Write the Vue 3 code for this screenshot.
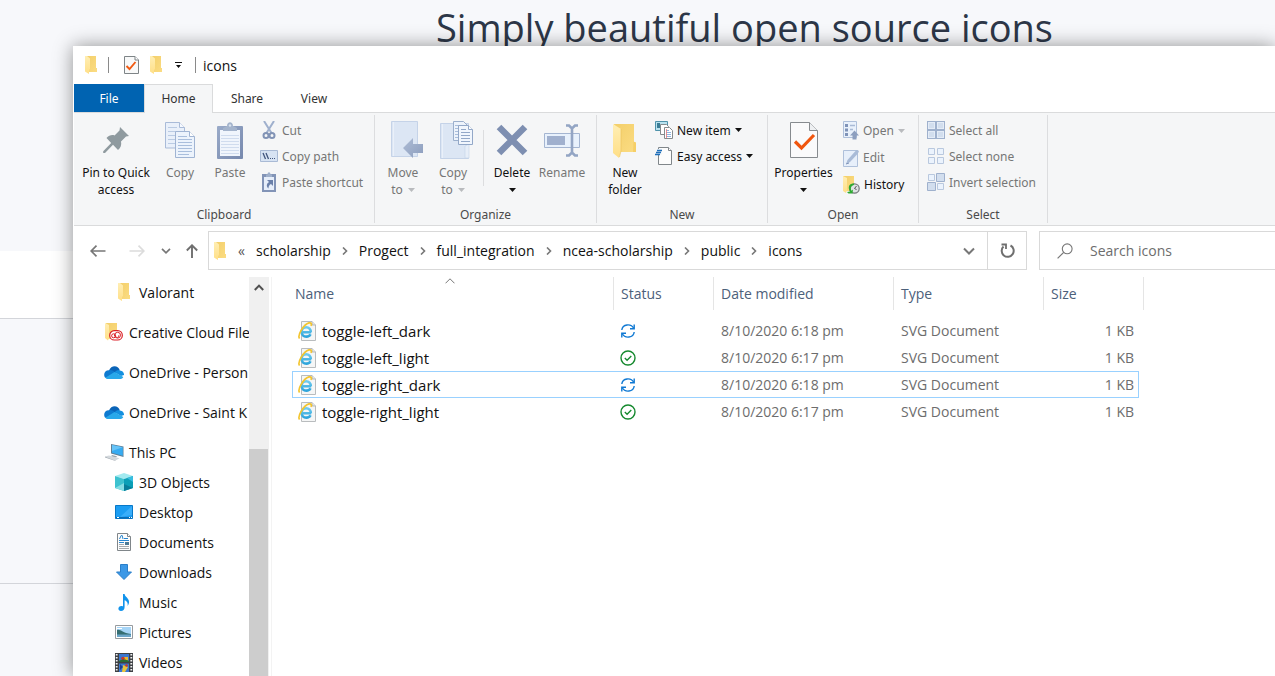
<script setup>
import { h, ref } from 'vue'

const sizes = {
  folder: [12, 18], propdoc: [15, 18], qat: [7, 6],
  pin: [26, 26], copy: [30, 36], paste: [26, 37], moveto: [40, 38], copyto: [42, 38],
  delete: [32, 32], rename: [36, 33], bigfolder: [24, 35], properties: [28, 36],
  cut: [18, 18], path: [18, 12], shortcut: [18, 20], newitem: [18, 18], easy: [18, 18],
  open: [16, 19], edit: [16, 18], history: [17, 18],
  selall: [18, 18], selnone: [18, 18], selinv: [18, 18],
  caret: [7, 4], back: [16, 12], forward: [16, 12], down: [10, 6], up: [12, 14],
  sep: [6, 8], expand: [12, 8], refresh: [15, 15], search: [16, 16], sort: [10, 6], scrollup: [10, 7],
  cloudfolder: [18, 18], onedrive: [20, 13], pc: [19, 18], cube: [18, 18], desktop: [18, 14],
  document: [16, 18], download: [16, 16], music: [12, 17], picture: [18, 14], video: [18, 19],
  svgdoc: [18, 20], sync: [14, 14], check: [16, 16],
}
const Icon = ({ name }) => {
  const [width, height] = sizes[name]
  return h('svg', { width, height, class: 'icon', 'aria-hidden': 'true' }, [h('use', { href: '#i-' + name })])
}
Icon.props = ['name']

const query = ref('')
const tabs = ['File', 'Home', 'Share', 'View']
const groups = [
  { name: 'Clipboard', cls: 'g-clip',
    big: [
      { icon: 'pin', lines: ['Pin to Quick', 'access'], wide: true },
      { icon: 'copy', lines: ['Copy'], off: true },
      { icon: 'paste', lines: ['Paste'], off: true },
    ],
    small: [
      { icon: 'cut', text: 'Cut', off: true },
      { icon: 'path', text: 'Copy path', off: true },
      { icon: 'shortcut', text: 'Paste shortcut', off: true },
    ] },
  { name: 'Organize', cls: 'g-org',
    big: [
      { icon: 'moveto', lines: ['Move', 'to'], off: true, caret: true },
      { icon: 'copyto', lines: ['Copy', 'to'], off: true, caret: true, divide: true },
      { icon: 'delete', lines: ['Delete', ''], caret: true },
      { icon: 'rename', lines: ['Rename'], off: true },
    ] },
  { name: 'New', cls: 'g-new',
    big: [{ icon: 'bigfolder', lines: ['New', 'folder'] }],
    small: [
      { icon: 'newitem', text: 'New item', caret: true },
      { icon: 'easy', text: 'Easy access', caret: true },
    ] },
  { name: 'Open', cls: 'g-open',
    big: [{ icon: 'properties', lines: ['Properties', ''], caret: true, mid: true }],
    small: [
      { icon: 'open', text: 'Open', off: true, caret: true },
      { icon: 'edit', text: 'Edit', off: true },
      { icon: 'history', text: 'History' },
    ] },
  { name: 'Select', cls: 'g-sel',
    small: [
      { icon: 'selall', text: 'Select all', off: true },
      { icon: 'selnone', text: 'Select none', off: true },
      { icon: 'selinv', text: 'Invert selection', off: true },
    ] },
]
const crumbs = ['scholarship', 'Progect', 'full_integration', 'ncea-scholarship', 'public', 'icons']
const places = [
  { icon: 'folder', text: 'Valorant', child: true },
  { icon: 'cloudfolder', text: 'Creative Cloud File', gap: true },
  { icon: 'onedrive', text: 'OneDrive - Person', gap: true },
  { icon: 'onedrive', text: 'OneDrive - Saint K', gap: true },
  { icon: 'pc', text: 'This PC', gap: true },
  { icon: 'cube', text: '3D Objects', child: true },
  { icon: 'desktop', text: 'Desktop', child: true },
  { icon: 'document', text: 'Documents', child: true },
  { icon: 'download', text: 'Downloads', child: true },
  { icon: 'music', text: 'Music', child: true },
  { icon: 'picture', text: 'Pictures', child: true },
  { icon: 'video', text: 'Videos', child: true },
]
const files = [
  { name: 'toggle-left_dark', status: 'sync', date: '8/10/2020 6:18 pm' },
  { name: 'toggle-left_light', status: 'check', date: '8/10/2020 6:17 pm' },
  { name: 'toggle-right_dark', status: 'sync', date: '8/10/2020 6:18 pm', focus: true },
  { name: 'toggle-right_light', status: 'check', date: '8/10/2020 6:17 pm' },
]
</script>

<template>
  <div class="page">
    <svg class="sprite" width="0" height="0" aria-hidden="true">
      <defs>
        <linearGradient id="gFold" x1="0" x2="1" y1="0" y2="1"><stop offset="0" stop-color="#f3cf6a" /><stop offset="1" stop-color="#fbdc83" /></linearGradient>
        <linearGradient id="gFlap" x1="0" x2="0" y1="0" y2="1"><stop offset="0" stop-color="#ffeeb4" /><stop offset="1" stop-color="#ffdf87" /></linearGradient>
        <linearGradient id="gClip" x1="0" x2="1" y1="0" y2="1"><stop offset="0" stop-color="#9aabc9" /><stop offset="1" stop-color="#7688ad" /></linearGradient>
        <linearGradient id="gArr" x1="0" x2="1" y1="0" y2="1"><stop offset="0" stop-color="#aebdd6" /><stop offset="1" stop-color="#8c9dbd" /></linearGradient>
        <linearGradient id="gE" x1="0" x2="0" y1="0" y2="1"><stop offset="0" stop-color="#6fcbee" /><stop offset="1" stop-color="#2fa5dc" /></linearGradient>
      </defs>
      <symbol id="i-folder" viewBox="0 0 12 18">
        <path d="M1 0h10v12h1v4H3z" fill="url(#gFold)" /><path d="M0 0h2l3 2.500V13l-1 1v4L0 15.500z" fill="url(#gFlap)" />
      </symbol>
      <symbol id="i-bigfolder" viewBox="0 0 24 35">
        <path d="M1 1h20v18l2 1v9H6z" fill="url(#gFold)" /><path d="M20.500 18.500l2.500 1v9.500h-3z" fill="#f6cf67" />
        <path d="M0 1l8 5v22l-2 7-6-5z" fill="url(#gFlap)" /><path d="M8 6v22l-1.500 6" stroke="#e9bf57" fill="none" stroke-width=".6" />
      </symbol>
      <symbol id="i-propdoc" viewBox="0 0 15 18">
        <path d="M.5.500h10.500l3.500 3.500v13.500H.5z" fill="#f8f9f9" stroke="#7e8487" /><path d="M11 .5V4h3.500" fill="#fff" stroke="#7e8487" />
        <path d="M2.500 10l3 3 6-7" fill="none" stroke="#f15a12" stroke-width="1.900" />
      </symbol>
      <symbol id="i-qat" viewBox="0 0 7 6"><path d="M0 0h7v1H0zM1 3h5L3.500 6z" fill="#111" /></symbol>
      <symbol id="i-pin" viewBox="0 0 26 26">
        <path d="M17 0l9 9-3 .5-5 5c.8 3-.3 6.500-3 8.500l-5-5.200L2 26H.2v-1.800l8-8.200L3.500 11c2-2.600 5.500-3.500 8-2.600l5-5z" fill="#8f9a9f" />
      </symbol>
      <symbol id="i-copy" viewBox="0 0 30 36">
        <path d="M.5.500h14l5 5V26H.5z" fill="#e9f0fa" stroke="#a9bbd8" /><path d="M14.500.5v5h5" fill="#f7faff" stroke="#a9bbd8" />
        <path d="M3 5.500h9M3 9.500h13M3 13.500h8M3 17.500h8M3 21.500h8" stroke="#bacbe3" />
        <path d="M10.500 9.500h14l5 5v21h-19z" fill="#ecf3fc" stroke="#a0b4d3" /><path d="M24.500 9.500v5h5" fill="#fff" stroke="#a0b4d3" />
        <path d="M13 14.500h9M13 17.500h14M13 20.500h14M13 23.500h14M13 26.500h14M13 29.500h14M13 32.500h11" stroke="#a9bedc" />
      </symbol>
      <symbol id="i-paste" viewBox="0 0 26 37">
        <rect y="4" width="26" height="33" rx="1" fill="url(#gClip)" /><path d="M3 8h20v26H3z" fill="#f0f5fc" />
        <path d="M4 13.500h18M4 16.500h18M4 19.500h18M4 22.500h18M4 25.500h18M4 28.500h18M4 31.500h18" stroke="#d0dcee" />
        <path d="M6 9V6l4-2c0-5 6-5 6 0l4 2v3z" fill="#a4b4cc" /><circle cx="13" cy="3.500" r="1.200" fill="#d9e2ef" />
      </symbol>
      <symbol id="i-moveto" viewBox="0 0 40 38">
        <path d="M8.500.5h26v35h-26z" fill="#dce6f4" stroke="#c5d3e8" /><path d="M10.500 1v34" stroke="#eaf0f9" />
        <path d="M20 27l10-10v6h10v9H30v5z" fill="url(#gArr)" />
      </symbol>
      <symbol id="i-copyto" viewBox="0 0 42 38">
        <path d="M8.500 2.500h28v35h-28z" fill="#dce6f4" stroke="#c5d3e8" /><path d="M10.500 3v34" stroke="#eaf0f9" /><path d="M33 25l4-2v14h-4z" fill="#e7eef8" stroke="#c5d3e8" stroke-width=".6" />
        <path d="M21.500.5h10l4 4v15h-14z" fill="#edf3fb" stroke="#9bafcc" /><path d="M23 4.500h7M23 7.500h6M23 10.500h4M23 13.500h4M23 16.500h4" stroke="#a9bedc" />
        <path d="M26.500 4.500h10l4 4v15h-14z" fill="#f1f6fd" stroke="#93a8c8" /><path d="M36.500 4.500v4h4" fill="#fff" stroke="#93a8c8" /><path d="M29 8.500h5M29 11.500h9M29 14.500h9M29 17.500h9M29 20.500h9" stroke="#93a8c8" />
      </symbol>
      <symbol id="i-delete" viewBox="0 0 32 32"><path d="M3 3l26 26M29 3L3 29" stroke="#7e8fb1" stroke-width="6.500" /></symbol>
      <symbol id="i-rename" viewBox="0 0 36 33">
        <path d="M.5 9.500h35v14H.5z" fill="#e8f1fc" stroke="#a4b5d1" /><path d="M3 12h18v9H3z" fill="#a0b0ce" />
        <path d="M22 1.500h3l3 3 3-3h3M22 31.500h3l3-3 3 3h3M28 4v25" fill="none" stroke="#93a5c4" stroke-width="2.600" />
      </symbol>
      <symbol id="i-properties" viewBox="0 0 28 36">
        <path d="M.5.500h19l8 8v27H.5z" fill="#fafafb" stroke="#878b8f" /><path d="M19.500.5v8h8" fill="#eef0f2" stroke="#878b8f" />
        <path d="M5 19.500l6.500 6.500L24 13" fill="none" stroke="#f0560f" stroke-width="3.200" />
      </symbol>
      <symbol id="i-cut" viewBox="0 0 18 18">
        <path d="M4 0l7.500 12M14 0L6.500 12" stroke="#9fb0cd" stroke-width="2" />
        <circle cx="6" cy="14.500" r="2.500" fill="none" stroke="#8193b5" stroke-width="2" /><circle cx="12" cy="14.500" r="2.500" fill="none" stroke="#8193b5" stroke-width="2" />
      </symbol>
      <symbol id="i-path" viewBox="0 0 18 12">
        <path d="M.5.500h17v11H.5z" fill="#d7e3f3" stroke="#a9bad5" /><path d="M3 3l2.500 6M6 3l2.500 6" stroke="#40557d" stroke-width="1.300" /><path d="M10 8h1v1h-1zM12 8h1v1h-1zM14 8h1v1h-1z" fill="#40557d" />
      </symbol>
      <symbol id="i-shortcut" viewBox="0 0 18 20">
        <path d="M2 2h14v18H2z" fill="#8294b7" /><path d="M4 5h10v13H4z" fill="#e6eefa" /><path d="M6 5V2.500h1.500C7.500-.5 10.500-.5 10.500 2.500H12V5z" fill="#9fb0cb" />
        <path d="M7 8h6v6l-2-2c-2 1-2.500 2.500-2.500 4.500-2.500-2-2-5 .5-6.500z" fill="#6a80aa" />
      </symbol>
      <symbol id="i-newitem" viewBox="0 0 18 18">
        <path d="M.5.500h12v9H.5z" fill="#b9e2ef" stroke="#4f93ab" /><path d="M2 2h3v5H2z" fill="#3b7d96" />
        <path d="M5.500 3.500h6l2 2v8h-8z" fill="#fff" stroke="#858a8d" /><path d="M9.500 6.500h5l3 3v8h-8z" fill="#fff" stroke="#858a8d" />
        <path d="M11 9.500h3M11 11.500h5M11 13.500h5M11 15.500h5" stroke="#8eb5e0" /><path d="M11.500 8v9" stroke="#ec7a7a" stroke-width=".8" />
      </symbol>
      <symbol id="i-easy" viewBox="0 0 18 18">
        <path d="M3.500.5h10l3 3v14h-13z" fill="#fcfcfc" stroke="#80868a" /><path d="M13.500.5v3h3" fill="#fff" stroke="#80868a" />
        <path d="M0 2h7v6H0z" fill="#f5f6f7" /><path d="M2 3.500h5M1 5.500h5M0 7.500h5" stroke="#1f6fba" stroke-width="1.400" />
      </symbol>
      <symbol id="i-open" viewBox="0 0 16 19">
        <path d="M.5.500h13v16H.5z" fill="#e9f1fb" stroke="#afc0da" /><path d="M2 3h3v3H2zM2 7.500h3v3H2zM2 12h3v3H2z" fill="#7f93b8" /><path d="M7 4.500h5M7 8.500h3" stroke="#a9bad5" stroke-width="1.400" />
        <path d="M11.500 9.500l4.500 5h-2.500v4h-4v-4H7z" fill="#8d9fbf" />
      </symbol>
      <symbol id="i-edit" viewBox="0 0 16 18">
        <path d="M.5 1.500h14v16H.5z" fill="#e7effa" stroke="#afc0da" /><path d="M3 15l1.500-4L12.500 2l2.500 2.500-8 8.500z" fill="#a9bbd7" /><path d="M3 15l3-1" stroke="#7f93b8" /><circle cx="14.200" cy="2.500" r="1.600" fill="#a9bbd7" />
      </symbol>
      <symbol id="i-history" viewBox="0 0 17 18">
        <path d="M0 0h11v15H2z" fill="url(#gFold)" /><path d="M0 0l4 2v12l-1 3-3-2z" fill="url(#gFlap)" />
        <circle cx="11.500" cy="12.500" r="4.700" fill="#dfe2e4" stroke="#75797c" stroke-width="1.200" /><path d="M11.500 12.500l2-2.500M11.500 12.500l2 1" stroke="#555" />
        <path d="M11 7.500C6 7 4.500 11 7 15.500L4 16l1.500 1.500h4l.5-4-1.500 1.200C7 12 8.500 9.500 11 9z" fill="#2faa33" />
      </symbol>
      <symbol id="i-selall" viewBox="0 0 18 18"><path d="M0 0h18v18H0z" fill="#9fb1cd" /><path d="M1 1h7v7H1zM10 1h7v7h-7zM1 10h7v7H1zM10 10h7v7h-7z" fill="#e4ecf7" /><path d="M2 2h5v5H2zM11 2h5v5h-5zM2 11h5v5H2zM11 11h5v5h-5z" fill="#d2deee" /></symbol>
      <symbol id="i-selnone" viewBox="0 0 18 18"><path d="M1.500 1.500h6v6h-6zM10.500 1.500h6v6h-6zM1.500 10.500h6v6h-6zM10.500 10.500h6v6h-6z" fill="#ebf3fd" stroke="#b9c8de" /></symbol>
      <symbol id="i-selinv" viewBox="0 0 18 18">
        <path d="M1.500 1.500h6v6h-6zM10.500 10.500h6v6h-6z" fill="#ebf3fd" stroke="#b9c8de" /><path d="M9.500.500h8v8h-8zM.5 9.500h8v8h-8z" fill="#d2deee" stroke="#9fb1cd" />
      </symbol>
      <symbol id="i-caret" viewBox="0 0 7 4"><path d="M0 0h7L3.500 4z" fill="currentColor" /></symbol>
      <symbol id="i-back" viewBox="0 0 16 12"><path d="M6.500.7L1.200 6l5.300 5.300M1.200 6H15.500" fill="none" stroke="#777" stroke-width="1.700" /></symbol>
      <symbol id="i-forward" viewBox="0 0 16 12"><path d="M9.500.7L14.800 6l-5.300 5.300M14.800 6H.5" fill="none" stroke="#dcdcdc" stroke-width="1.700" /></symbol>
      <symbol id="i-down" viewBox="0 0 10 6"><path d="M1 .8l4 4 4-4" fill="none" stroke="#777" stroke-width="1.700" /></symbol>
      <symbol id="i-up" viewBox="0 0 12 14"><path d="M.8 6.500L6 1.300l5.200 5.200M6 1.300V14" fill="none" stroke="#6f6f6f" stroke-width="1.900" /></symbol>
      <symbol id="i-sep" viewBox="0 0 6 8"><path d="M1 .5L4.500 4 1 7.500" fill="none" stroke="#777" stroke-width="1.600" /></symbol>
      <symbol id="i-expand" viewBox="0 0 12 8"><path d="M1 1.500l5 5 5-5" fill="none" stroke="#777" stroke-width="2" /></symbol>
      <symbol id="i-refresh" viewBox="0 0 15 15"><path d="M10.500 2.500a6 6 0 1 1-7 1" fill="none" stroke="#6f6f6f" stroke-width="2" /><path d="M1.500 1.500h4.500v4.500" fill="none" stroke="#6f6f6f" stroke-width="1.800" /></symbol>
      <symbol id="i-search" viewBox="0 0 16 16"><circle cx="10.200" cy="5.800" r="4.900" fill="none" stroke="#777" stroke-width="1.100" /><path d="M6.700 9.300L.6 15.400" stroke="#777" stroke-width="1.200" /></symbol>
      <symbol id="i-sort" viewBox="0 0 10 6"><path d="M.5 5.300L5 .8l4.500 4.500" fill="none" stroke="#777" /></symbol>
      <symbol id="i-scrollup" viewBox="0 0 10 7"><path d="M.8 6L5 1.600 9.200 6" fill="none" stroke="#505050" stroke-width="2" /></symbol>
      <symbol id="i-cloudfolder" viewBox="0 0 18 18">
        <path d="M1 0h11v16H2z" fill="url(#gFold)" /><path d="M0 0l4 2v13l-1 2.500L0 15z" fill="url(#gFlap)" />
        <rect x="4.700" y="7.700" width="12.600" height="9.300" rx="4.600" fill="#fff" stroke="#da1f26" stroke-width="1.200" />
        <circle cx="8.600" cy="12.800" r="2" fill="none" stroke="#da1f26" stroke-width="1" /><circle cx="12.600" cy="12.200" r="2.900" fill="none" stroke="#da1f26" stroke-width="1" /><path d="M9 12l2.500 2.200c1.500.8 2.600-.6 2.300-2" fill="none" stroke="#da1f26" stroke-width=".9" />
      </symbol>
      <symbol id="i-onedrive" viewBox="0 0 20 13">
        <path d="M5 4.500C7-1 14-1.200 15.800 4.200L10 8z" fill="#0a64b8" /><path d="M1 11.500C-1.200 8 1.200 4 5 4.200c2-.5 4 .5 5 1.300l2.500 2L4 13 1 11.500z" fill="#0d7ad0" />
        <path d="M10.500 6.200c1.500-2 4-2.400 5.500-1.800 3 .4 4.200 2.600 4 4.600l-3 1z" fill="#1490df" /><path d="M1.300 11.700L10.500 6l8.800 5c-.8 1.400-1.800 2-3.300 2H4.500c-1.400 0-2.500-.4-3.200-1.300z" fill="#28a8ea" />
      </symbol>
      <symbol id="i-pc" viewBox="0 0 19 18">
        <path d="M6 1l12.500 2.500V14L6 10.500z" fill="#5f7f96" /><path d="M7 2l10.800 2.300v8.500L7 9.800z" fill="#37abf1" /><path d="M7 2l10.800 2.300L7 8z" fill="#67c4f8" />
        <path d="M7 12l5 1.200-1 1.200-5-1z" fill="#9ba5ad" /><path d="M0 13.500l4-1 10.500 2.700-4 2.300z" fill="#d3d8dc" /><path d="M0 13.500l10.500 4v.5L0 14.500z" fill="#a7afb6" />
      </symbol>
      <symbol id="i-cube" viewBox="0 0 18 18">
        <path d="M0 3l9-3 9 3-9 3z" fill="#a2eaf0" /><path d="M0 3l9 3v12l-9-3z" fill="#3dc2cf" /><path d="M18 3L9 6v12l9-3z" fill="#0a9fb7" /><path d="M0 15l9-5v8z" fill="#85dde4" /><path d="M18 15L9 11v7z" fill="#077e9a" /><path d="M12 5l6-2v6z" fill="#37bde0" />
      </symbol>
      <symbol id="i-desktop" viewBox="0 0 18 14"><path d="M.5.500h17v13H.5z" fill="#1c9df2" stroke="#0878c8" /><path d="M17 1v9L5 12z" fill="#3aaefa" /><path d="M1 12h16v1.500H1z" fill="#0a6cb5" /><path d="M2 12.500h2M14 12.500h1M16 12.500h1" stroke="#fff" /></symbol>
      <symbol id="i-document" viewBox="0 0 16 18">
        <path d="M1.500.500h10l3 3v14h-13z" fill="#fcfcfc" stroke="#80868a" /><path d="M11.500.5v3h3" fill="#fff" stroke="#80868a" />
        <path d="M3.500 6l1.700-3.500h1L7 6M8 5.500h4" fill="none" stroke="#2786cf" /><path d="M3 7.500h10M3 9.500h5" stroke="#2786cf" /><path d="M3 11.500h5M3 13.500h10M3 15.500h10" stroke="#a5aaae" /><path d="M9 9h4v3H9z" fill="#4a7895" />
      </symbol>
      <symbol id="i-download" viewBox="0 0 16 16"><path d="M4.500.5h7V8h4L8 15.500.5 8h4z" fill="#3c98e6" stroke="#2b7fc9" /></symbol>
      <symbol id="i-music" viewBox="0 0 12 17"><path d="M5 0h1.600c.3 3 4.800 4 4.400 8.500-.2 1.500-.8 2.500-1.500 3.500.8-3.500-.8-5-2.900-5.800V13c0 2.500-1.500 4-3.600 4C-.7 17-.4 12 3.500 12c.6 0 1 .1 1.500.4z" fill="#1193ec" /></symbol>
      <symbol id="i-picture" viewBox="0 0 18 14"><path d="M.5.500h17v13H.5z" fill="#fff" stroke="#969b9f" /><path d="M2 2h14v10H2z" fill="#a6d5f7" /><path d="M2 5c4-1 5 3 14 4v3H2z" fill="#356e72" /><path d="M2 9.500h14V12H2z" fill="#6ca6c9" /><path d="M2 3h5v1H2z" fill="#fff" /></symbol>
      <symbol id="i-video" viewBox="0 0 18 19">
        <path d="M0 0h18v19H0z" fill="#3e4145" /><path d="M1.700 1v18M16.300 1v18" stroke="#f2f2f2" stroke-width="1.800" stroke-dasharray="1.600 1.400" />
        <path d="M4 1h10v8H4zM4 10.500h10V19H4z" fill="#3b77cf" /><path d="M9 4h4v4H9z" fill="#e7b92d" /><circle cx="8" cy="5.500" r="1.800" fill="#c9362b" /><path d="M4 8c3-2 7-2 10 0v1H4z" fill="#2b6b33" /><path d="M8 12l5 2-3 5H7z" fill="#e9c43a" /><path d="M5 11l3 3-3 3z" fill="#1d3f90" /><circle cx="11.500" cy="12.500" r="1.300" fill="#c9362b" />
      </symbol>
      <symbol id="i-svgdoc" viewBox="0 0 18 20">
        <path d="M3.500.5h10.500l3.500 3.500v15.500h-14z" fill="#f5f6f6" stroke="#b9bcbe" /><path d="M14 .5V4h3.500" fill="#e3e5e6" stroke="#a9acae" stroke-width=".8" />
        <path d="M13.200 11.200H5M12.800 11.200c0-3-1.900-5-4.600-5s-4.600 2-4.600 4.700 2 4.700 4.700 4.700c2 0 3.500-.9 4.200-2.400" fill="none" stroke="url(#gE)" stroke-width="2.600" />
        <path d="M1.600 17.500C-1 14.500 5.500 3.500 11 1.900c2.500-.5 2.800 1.300 1.900 3" fill="none" stroke="#f3c52f" stroke-width="1.700" />
      </symbol>
      <symbol id="i-sync" viewBox="0 0 14 14"><path d="M.8 6C1.500 0 10-1 12.800 4.500M13.200 8C12.500 14 4 15 1.200 9.500" fill="none" stroke="#1079d3" stroke-width="1.400" /><path d="M13.200.5v4.300H9M.8 13.500V9.200H5" fill="none" stroke="#1079d3" stroke-width="1.400" /></symbol>
      <symbol id="i-check" viewBox="0 0 16 16"><circle cx="8" cy="8" r="7" fill="none" stroke="#15892e" stroke-width="1.400" /><path d="M4.800 8l2.300 2.300 4.200-4.300" fill="none" stroke="#15892e" stroke-width="1.300" /></symbol>
    </svg>

    <header class="hero"><h1>Simply beautiful open source icons</h1></header>
    <div class="band"></div>
    <div class="block"></div>

    <main class="window">
      <div class="titlebar">
        <Icon name="folder" /><i class="bar"></i>
        <button class="plain first" aria-label="Properties"><Icon name="propdoc" /></button>
        <button class="plain" aria-label="New folder"><Icon name="folder" /></button>
        <button class="plain more-tools" aria-label="Customize Quick Access Toolbar"><Icon name="qat" /></button>
        <i class="bar"></i><span class="title">icons</span>
      </div>
      <nav class="tabs">
        <button v-for="t in tabs" :key="t" :class="['tab', t.toLowerCase()]">{{ t }}</button>
      </nav>
      <div class="ribbon">
        <section v-for="g in groups" :key="g.name" :class="['group', g.cls]">
          <div class="tools">
            <template v-for="b in g.big" :key="b.icon">
              <button :class="['big', { off: b.off, wide: b.wide, mid: b.mid }]">
                <span class="pic"><Icon :name="b.icon" /></span>
                <span v-for="(l, i) in b.lines" :key="i" class="line">{{ l }}<Icon v-if="b.caret && i === 1" name="caret" class="caret" /></span>
              </button>
              <i v-if="b.divide" class="divide"></i>
            </template>
            <div v-if="g.small" class="list">
              <button v-for="s in g.small" :key="s.text" :class="['small', { off: s.off }]">
                <Icon :name="s.icon" /><span>{{ s.text }}</span><Icon v-if="s.caret" name="caret" class="caret" />
              </button>
            </div>
          </div>
          <div class="caption">{{ g.name }}</div>
        </section>
      </div>

      <div class="address">
        <div class="arrows">
          <button class="plain" aria-label="Back"><Icon name="back" /></button>
          <button class="plain" aria-label="Forward"><Icon name="forward" /></button>
          <button class="plain" aria-label="Recent locations"><Icon name="down" /></button>
          <button class="plain" aria-label="Up"><Icon name="up" /></button>
        </div>
        <div class="pathbox">
          <Icon name="folder" /><span class="more">«</span>
          <template v-for="(c, i) in crumbs" :key="c">
            <span v-if="i" class="sep"><Icon name="sep" /></span>
            <button class="plain crumb">{{ c }}</button>
          </template>
          <button class="plain expand" aria-label="Previous locations"><Icon name="expand" /></button>
          <button class="plain refresh" aria-label="Refresh"><Icon name="refresh" /></button>
        </div>
        <label class="searchbox"><Icon name="search" /><input v-model="query" type="text" placeholder="Search icons" aria-label="Search icons" /></label>
      </div>

      <div class="body">
        <nav class="places">
          <a v-for="(p, i) in places" :key="i" href="#" :class="['place', { child: p.child, gap: p.gap }]">
            <span class="picon"><Icon :name="p.icon" /></span><span>{{ p.text }}</span>
          </a>
        </nav>
        <div class="scroll"><button class="plain" aria-label="Scroll up"><Icon name="scrollup" /></button><div class="thumb"></div></div>
        <div class="files">
          <table>
            <colgroup><col class="c-name" /><col class="c-status" /><col class="c-date" /><col class="c-type" /><col class="c-size" /><col class="c-end" /></colgroup>
            <thead>
              <tr><th class="name">Name<span class="sort"><Icon name="sort" /></span></th><th>Status</th><th>Date modified</th><th>Type</th><th colspan="2">Size</th></tr>
            </thead>
            <tbody>
              <tr class="space"><td colspan="6"></td></tr>
              <tr v-for="f in files" :key="f.name" :class="{ focus: f.focus }">
                <td class="fname"><div class="cell"><Icon name="svgdoc" /><span>{{ f.name }}</span></div></td>
                <td><span class="stat"><Icon :name="f.status" /></span></td>
                <td>{{ f.date }}</td><td>SVG Document</td><td class="num">1 KB</td>
              </tr>
            </tbody>
          </table>
        </div>
      </div>
    </main>
  </div>
</template>

<style>
body { margin: 0; }
</style>

<style scoped>
.page { position: relative; height: 100vh; overflow: hidden; background: #f7f8fb; font-family: "Open Sans", "Noto Sans", sans-serif; font-size: 14px; color: #111; }
.page * { box-sizing: border-box; }
.sprite { position: absolute; }
.page :deep(.icon) { display: block; flex: none; }
.hero { height: 251px; padding-left: 436px; }
h1 { margin: 0; font-size: 38px; line-height: 54px; font-weight: 400; color: #2d3748; white-space: nowrap; }
.band { height: 68px; background: #fff; border-bottom: 1px solid #d3d5da; }
.block { height: 265px; border-bottom: 1px solid #d3d5da; }
button { font: inherit; color: inherit; border: 0; background: none; padding: 0; margin: 0; }
.window { position: absolute; inset: 46px 0 0 73px; display: flex; flex-direction: column; background: #fff; border-left: 1px solid #fff; box-shadow: 0 0 18px rgba(0, 0, 0, .42); }
.titlebar { display: flex; align-items: center; height: 38px; padding-left: 11px; gap: 11px; }
.bar { width: 1px; height: 16px; background: #8a8a8a; }
.first { margin-left: 4px; }
.more-tools { margin: 0 2px; }
.title { margin-left: -4px; }
.tabs, .ribbon { font-family: "Noto Sans", "Open Sans", sans-serif; font-size: 12px; }
.tabs { display: flex; height: 28px; color: #333; }
.tab { width: 66px; height: 28px; }
.tab.file { width: 70px; background: #0063b1; color: #fff; }
.tab.home { width: 69px; height: 29px; background: #f5f6f7; border: 1px solid #dadbdc; border-bottom: 0; padding-bottom: 2px; z-index: 1; }
.tab.share { width: 68px; }
.ribbon { display: flex; height: 114px; flex: none; background: #f5f6f7; border-top: 1px solid #dadbdc; border-bottom: 1px solid #dadbdc; }
.group { display: flex; flex-direction: column; justify-content: space-between; margin: 2px 0; border-right: 1px solid #dcdddf; flex: none; }
.g-clip { width: 301px; }
.g-org { width: 222px; }
.g-new { width: 171px; }
.g-open { width: 151px; }
.g-sel { width: 129px; }
.tools { display: flex; align-items: flex-start; padding-left: 3px; }
.big { display: flex; flex-direction: column; align-items: center; width: 50px; padding-top: 5px; white-space: nowrap; }
.big.wide { width: 78px; }
.big.mid { width: 65px; }
.pic { display: flex; align-items: center; justify-content: center; height: 40px; margin-bottom: 4px; }
.line { display: flex; align-items: center; justify-content: center; gap: 5px; height: 17px; line-height: 17px; }
.off { color: #767676; }
.off .caret { color: #b9bbbe; }
.divide { width: 1px; height: 56px; margin: 15px 3px 0 5px; background: #dcdddf; }
.list { display: flex; flex-direction: column; padding: 2px 0 0 5px; }
.g-open .list { padding-left: 7px; }
.small { display: flex; align-items: center; gap: 4px; height: 26px; white-space: nowrap; }
.g-open .small { height: 27px; }
.caption { height: 17px; line-height: 17px; text-align: center; color: #4a4a4a; }
.address { display: flex; align-items: center; flex: none; height: 51px; padding-bottom: 2px; }
.arrows { display: grid; grid-template-columns: 39px 32px 25px 22px; align-items: center; padding-left: 16px; }
.pathbox { display: flex; align-items: center; flex: 1; max-width: 819px; height: 39px; border: 1px solid #d9d9d9; padding-left: 5px; white-space: nowrap; }
.more { width: 18px; margin-left: 12px; color: #555; }
.sep { display: flex; justify-content: center; width: 28px; }
.expand { margin-left: auto; margin-right: 12px; }
.refresh { display: flex; align-items: center; justify-content: center; width: 39px; height: 37px; border-left: 1px solid #d9d9d9; }
.searchbox { display: flex; align-items: center; flex: none; width: 236px; height: 39px; margin-left: 12px; padding-left: 17px; gap: 17px; border: 1px solid #d9d9d9; border-right: 0; }
.searchbox input { flex: 1; min-width: 0; border: 0; outline: 0; padding: 0; background: none; font: inherit; color: #333; }
.searchbox input::placeholder { color: #6d6d6d; opacity: 1; }
.body { display: flex; flex: 1; min-height: 0; overflow: hidden; }
.places { width: 175px; flex: none; overflow: hidden; }
.place { display: flex; align-items: center; height: 30px; padding-left: 29px; color: #111; text-decoration: none; white-space: nowrap; }
.place.child { padding-left: 39px; }
.place.gap { margin-top: 10px; }
.picon { display: flex; justify-content: center; flex: none; width: 22px; margin-right: 4px; }
.scroll { display: flex; flex-direction: column; width: 20px; flex: none; background: #f0f0f0; }
.scroll .plain { display: flex; justify-content: center; height: 172px; padding-top: 7px; }
.thumb { flex: 1; width: 19px; background: #cdcdcd; }
.files { flex: 1; min-width: 0; margin-left: 2px; padding-left: 20px; border-left: 1px solid #f3f3f3; }
table { width: 852px; table-layout: fixed; border-collapse: separate; border-spacing: 0; color: #6d6d6d; }
.c-name { width: 322px; } .c-status { width: 100px; } .c-date { width: 180px; } .c-type { width: 150px; } .c-size { width: 95px; } .c-end { width: 5px; }
th { height: 33px; padding: 0 0 0 7px; border-right: 1px solid #e5e5e5; text-align: left; font-weight: 400; color: #4c607a; }
th.name { position: relative; padding-left: 3px; }
.sort { position: absolute; top: 1px; left: calc(50% - 8px); }
td { height: 27px; padding: 0 0 0 7px; white-space: nowrap; line-height: 20px; border: 1px solid transparent; border-width: 1px 0; }
.space td { height: 7px; padding: 0; border: 0; }
.fname { padding-left: 5px; font-size: 15px; color: #111; border-left-width: 1px; }
.cell { display: flex; align-items: center; gap: 6px; }
.stat { display: flex; align-items: center; justify-content: center; width: 14px; }
.num { text-align: right; padding-right: 4px; border-right-width: 1px; }
.focus td { border-color: #99d1ff; }
</style>
